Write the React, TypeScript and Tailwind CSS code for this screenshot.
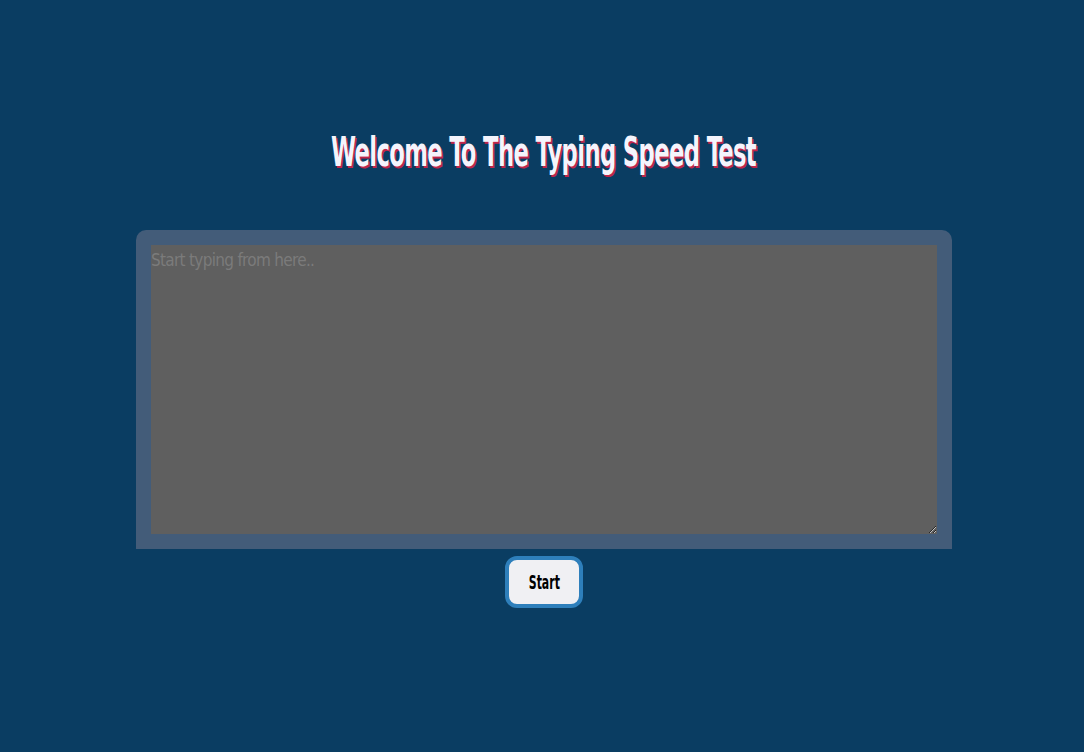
import React from "react";

export default function App() {
  return (
    <div className="min-h-[752px] w-full bg-[#0a3d62] pl-[4px] flex flex-col items-center font-['DejaVu_Sans_Condensed','DejaVu_Sans',sans-serif]">
      <h1 className="mt-[123px] h-[58px] flex items-center justify-center w-[600px] text-[41px] font-bold leading-[58px] text-[#f4f4fc] [text-shadow:2px_2px_0_#c0254a] tracking-[-1px] whitespace-nowrap">
        <span className="inline-block scale-x-[0.615]">Welcome To The Typing Speed Test</span>
      </h1>
      <div className="mt-[49px] w-[816px] h-[319px] bg-[#435c79] rounded-t-[10px] p-[15px] flex">
        <textarea
          className="flex-1 bg-[#5f5f5f] outline-none border-0 text-[17px] tracking-[-0.7px] leading-[30px] p-0 text-[#8a8a8a] placeholder:text-[#7b7b7b] resize font-['DejaVu_Sans_Condensed','DejaVu_Sans',sans-serif]"
          placeholder="Start typing from here.."
        />
      </div>
      <button className="mt-[7px] w-[78px] h-[52px] rounded-[12px] border-[4px] border-[#2e7fbb] bg-[#f0f0f3] text-black text-[19px] font-bold flex items-center justify-center font-['DejaVu_Sans_Condensed','DejaVu_Sans',sans-serif]">
        <span className="inline-block scale-x-[0.64]">Start</span>
      </button>
    </div>
  );
}
